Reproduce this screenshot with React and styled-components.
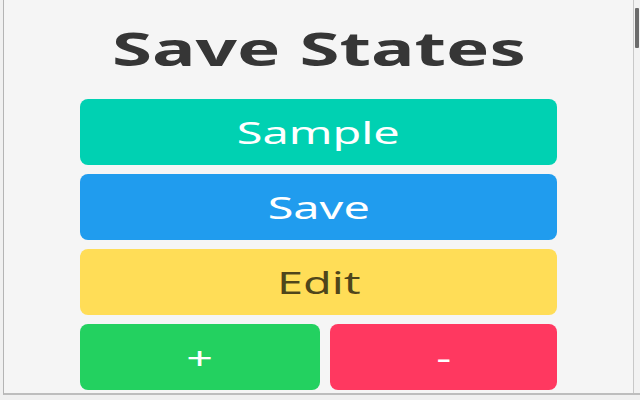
import React from "react";
import styled, { createGlobalStyle } from "styled-components";

const Global = createGlobalStyle`
  html, body {
    margin: 0;
    padding: 0;
    background: #f0f0f0;
  }
  * { box-sizing: border-box; }
`;

const Shell = styled.div`
  width: 640px;
  height: 400px;
  display: flex;
  flex-direction: column;
  background: #f0f0f0;
  overflow: hidden;
`;

const Frame = styled.div`
  height: 395px;
  display: flex;
  margin-left: 3px;
  border-left: 1px solid #b4b4b4;
  border-bottom: 2px solid #bdbdbd;
`;

const Content = styled.main`
  flex: 1;
  background: #f5f5f5;
  display: flex;
  flex-direction: column;
  align-items: center;
  padding-top: 19px;
  font-family: "Noto Sans", "Open Sans", sans-serif;
`;

const Scrollbar = styled.div`
  width: 7px;
  border-left: 1px solid #c8c8c8;
  background: #f2f2f2;
  padding: 8px 1px 0 1px;
`;

const Thumb = styled.div`
  width: 4px;
  height: 40px;
  background: #6b6b6b;
  border-radius: 1px;
`;

/* wide, stretched lettering used by the popup */
const Wide = styled.span`
  display: inline-block;
  transform: scaleX(${(p) => p.$x || 1.56});
  transform-origin: center;
  white-space: nowrap;
`;

const Title = styled.h1`
  margin: 0;
  font-size: 46px;
  font-weight: 700;
  line-height: 58px;
  color: #363636;
`;

const Stack = styled.div`
  width: 477px;
  margin-top: 22px;
  display: flex;
  flex-direction: column;
  gap: 9px;
`;

const Pair = styled.div`
  display: grid;
  grid-template-columns: 240px 1fr;
  gap: 10px;
`;

const tones = {
  primary: { bg: "#00d1b2", fg: "#ffffff" },
  info: { bg: "#209cee", fg: "#ffffff" },
  warning: { bg: "#ffdd57", fg: "rgba(0, 0, 0, 0.7)" },
  success: { bg: "#23d160", fg: "#ffffff" },
  danger: { bg: "#ff3860", fg: "#ffffff" },
};

const Button = styled.button`
  height: 66px;
  border: none;
  border-radius: 8px;
  background: ${(p) => tones[p.$tone].bg};
  color: ${(p) => tones[p.$tone].fg};
  font-family: "Noto Sans", "Open Sans", sans-serif;
  font-size: 30px;
  font-weight: 400;
  padding: 0;
  display: flex;
  align-items: center;
  justify-content: center;
  cursor: pointer;
`;

export default function App() {
  return (
    <Shell>
      <Global />
      <Frame>
        <Content>
          <Title>
            <Wide $x={1.58}>Save States</Wide>
          </Title>
          <Stack>
            <Button $tone="primary">
              <Wide>Sample</Wide>
            </Button>
            <Button $tone="info">
              <Wide>Save</Wide>
            </Button>
            <Button $tone="warning">
              <Wide>Edit</Wide>
            </Button>
            <Pair>
              <Button $tone="success">
                <Wide>+</Wide>
              </Button>
              <Button $tone="danger">
                <Wide>-</Wide>
              </Button>
            </Pair>
          </Stack>
        </Content>
        <Scrollbar>
          <Thumb />
        </Scrollbar>
      </Frame>
    </Shell>
  );
}
